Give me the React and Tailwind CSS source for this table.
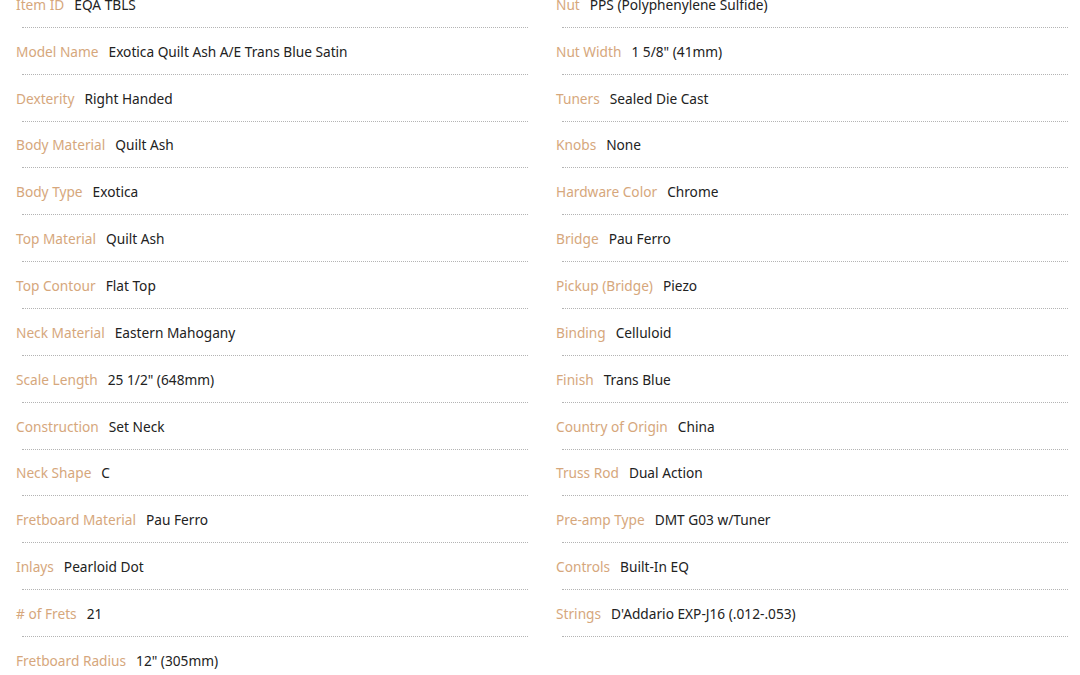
import React from 'react'

const left = [
  ['Item ID', 'EQA TBLS'],
  ['Model Name', 'Exotica Quilt Ash A/E Trans Blue Satin'],
  ['Dexterity', 'Right Handed'],
  ['Body Material', 'Quilt Ash'],
  ['Body Type', 'Exotica'],
  ['Top Material', 'Quilt Ash'],
  ['Top Contour', 'Flat Top'],
  ['Neck Material', 'Eastern Mahogany'],
  ['Scale Length', '25 1/2" (648mm)'],
  ['Construction', 'Set Neck'],
  ['Neck Shape', 'C'],
  ['Fretboard Material', 'Pau Ferro'],
  ['Inlays', 'Pearloid Dot'],
  ['# of Frets', '21'],
  ['Fretboard Radius', '12" (305mm)'],
]

const right = [
  ['Nut', 'PPS (Polyphenylene Sulfide)'],
  ['Nut Width', '1 5/8" (41mm)'],
  ['Tuners', 'Sealed Die Cast'],
  ['Knobs', 'None'],
  ['Hardware Color', 'Chrome'],
  ['Bridge', 'Pau Ferro'],
  ['Pickup (Bridge)', 'Piezo'],
  ['Binding', 'Celluloid'],
  ['Finish', 'Trans Blue'],
  ['Country of Origin', 'China'],
  ['Truss Rod', 'Dual Action'],
  ['Pre-amp Type', 'DMT G03 w/Tuner'],
  ['Controls', 'Built-In EQ'],
  ['Strings', "D'Addario EXP-J16 (.012-.053)"],
]

function SpecList({ items }) {
  return (
    <ul className="flex flex-col">
      {items.map(([label, value]) => (
        <li key={label} className="pt-[13.86px]">
          <div className="h-5 leading-5 whitespace-nowrap">
            <span className="text-[#d6a77c] mr-[10px]">{label}</span>
            <span className="text-[#222]">{value}</span>
          </div>
          <div className="ml-[6px] mt-[12px] border-b border-dotted border-[#b4b4b4]" />
        </li>
      ))}
    </ul>
  )
}

export default function App() {
  return (
    <div className="w-[1080px] h-[675px] overflow-hidden bg-white font-['Noto_Sans',sans-serif] text-[13.7px]">
      <div className="-mt-[19px] pl-4 pr-3 grid grid-cols-2 gap-x-7">
        <SpecList items={left} />
        <SpecList items={right} />
      </div>
    </div>
  )
}
